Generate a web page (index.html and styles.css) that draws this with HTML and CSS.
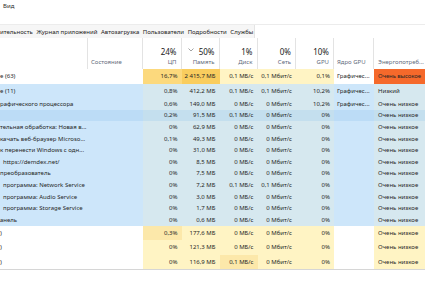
FILE: index.html
```html
<!DOCTYPE html>
<html lang="ru">
<head>
    <meta charset="UTF-8">
    <meta name="viewport" content="width=device-width, initial-scale=1.0">
    <title>Диспетчер задач</title>
    <link rel="stylesheet" href="styles.css">
</head>
<body>
    <div class="menu">Вид</div>
    <div class="tabs">
        <span class="tab first">ительность</span>
        <span class="tab">Журнал приложений</span>
        <span class="tab">Автозагрузка</span>
        <span class="tab">Пользователи</span>
        <span class="tab">Подробности</span>
        <span class="tab">Службы</span>
    </div>

    <div class="head">
        <div class="hcell"></div>
        <div class="hcell text"><span class="label">Состояние</span></div>
        <div class="hcell"><span class="pct">24%</span><span class="label">ЦП</span></div>
        <div class="hcell">
            <span class="pct sorted">
                <svg width="6" height="4" viewBox="0 0 6 4"><path d="M0.5 0.5 L3 3 L5.5 0.5" fill="none" stroke="#8a8a8a" stroke-width="0.8"/></svg>
                50%
            </span>
            <span class="label">Память</span>
        </div>
        <div class="hcell"><span class="pct">1%</span><span class="label">Диск</span></div>
        <div class="hcell"><span class="pct">0%</span><span class="label">Сеть</span></div>
        <div class="hcell"><span class="pct">10%</span><span class="label">GPU</span></div>
        <div class="hcell text"><span class="label">Ядро GPU</span></div>
        <div class="hcell text last"><span class="label">Энергопотреб...</span></div>
    </div>

    <div class="rows">
        <div class="row app">
            <div class="c name">e (63)</div><div class="c"></div>
            <div class="c n h3">16,7%</div><div class="c n h4">2 415,7 МБ</div>
            <div class="c n h0">0,1 МБ/с</div><div class="c n h0">0,1 Мбит/с</div>
            <div class="c n h0">0,1%</div><div class="c t">Графичес...</div>
            <div class="c t hot">Очень высокое</div>
        </div>
        <div class="row group">
            <div class="c name">e (11)</div><div class="c"></div>
            <div class="c n h0">0,8%</div><div class="c n h0">412,2 МБ</div>
            <div class="c n h0">0,1 МБ/с</div><div class="c n h0">0,1 Мбит/с</div>
            <div class="c n h0">10,2%</div><div class="c t">Графичес...</div>
            <div class="c t h0">Низкий</div>
        </div>
        <div class="row child">
            <div class="c name">рафического процессора</div><div class="c"></div>
            <div class="c n h0">0,6%</div><div class="c n h0">149,0 МБ</div>
            <div class="c n h0">0 МБ/с</div><div class="c n h0">0 Мбит/с</div>
            <div class="c n h0">10,2%</div><div class="c t">Графичес...</div>
            <div class="c t h0">Очень низкое</div>
        </div>
        <div class="row child hover">
            <div class="c name"></div><div class="c"></div>
            <div class="c n h0">0,2%</div><div class="c n h0">91,5 МБ</div>
            <div class="c n h0">0,1 МБ/с</div><div class="c n h0">0 Мбит/с</div>
            <div class="c n h0">0%</div><div class="c t"></div>
            <div class="c t h0">Очень низкое</div>
        </div>
        <div class="row child">
            <div class="c name">тельная обработка: Новая в...</div><div class="c"></div>
            <div class="c n h0">0%</div><div class="c n h0">62,9 МБ</div>
            <div class="c n h0">0 МБ/с</div><div class="c n h0">0 Мбит/с</div>
            <div class="c n h0">0%</div><div class="c t"></div>
            <div class="c t h0">Очень низкое</div>
        </div>
        <div class="row child">
            <div class="c name">качать веб-браузер Microso...</div><div class="c"></div>
            <div class="c n h0">0,1%</div><div class="c n h0">49,3 МБ</div>
            <div class="c n h0">0 МБ/с</div><div class="c n h0">0 Мбит/с</div>
            <div class="c n h0">0%</div><div class="c t"></div>
            <div class="c t h0">Очень низкое</div>
        </div>
        <div class="row child">
            <div class="c name">к перенести Windows с одн...</div><div class="c"></div>
            <div class="c n h0">0%</div><div class="c n h0">31,0 МБ</div>
            <div class="c n h0">0 МБ/с</div><div class="c n h0">0 Мбит/с</div>
            <div class="c n h0">0%</div><div class="c t"></div>
            <div class="c t h0">Очень низкое</div>
        </div>
        <div class="row child">
            <div class="c name cut">https://demdex.net/</div><div class="c"></div>
            <div class="c n h0">0%</div><div class="c n h0">8,5 МБ</div>
            <div class="c n h0">0 МБ/с</div><div class="c n h0">0 Мбит/с</div>
            <div class="c n h0">0%</div><div class="c t"></div>
            <div class="c t h0">Очень низкое</div>
        </div>
        <div class="row child">
            <div class="c name">преобразователь</div><div class="c"></div>
            <div class="c n h0">0%</div><div class="c n h0">7,5 МБ</div>
            <div class="c n h0">0 МБ/с</div><div class="c n h0">0 Мбит/с</div>
            <div class="c n h0">0%</div><div class="c t"></div>
            <div class="c t h0">Очень низкое</div>
        </div>
        <div class="row child">
            <div class="c name cut">программа: Network Service</div><div class="c"></div>
            <div class="c n h0">0%</div><div class="c n h0">7,2 МБ</div>
            <div class="c n h0">0,1 МБ/с</div><div class="c n h0">0,1 Мбит/с</div>
            <div class="c n h0">0%</div><div class="c t"></div>
            <div class="c t h0">Очень низкое</div>
        </div>
        <div class="row child">
            <div class="c name cut">программа: Audio Service</div><div class="c"></div>
            <div class="c n h0">0%</div><div class="c n h0">3,0 МБ</div>
            <div class="c n h0">0 МБ/с</div><div class="c n h0">0 Мбит/с</div>
            <div class="c n h0">0%</div><div class="c t"></div>
            <div class="c t h0">Очень низкое</div>
        </div>
        <div class="row child">
            <div class="c name cut">программа: Storage Service</div><div class="c"></div>
            <div class="c n h0">0%</div><div class="c n h0">1,7 МБ</div>
            <div class="c n h0">0 МБ/с</div><div class="c n h0">0 Мбит/с</div>
            <div class="c n h0">0%</div><div class="c t"></div>
            <div class="c t h0">Очень низкое</div>
        </div>
        <div class="row child">
            <div class="c name">анель</div><div class="c"></div>
            <div class="c n h0">0%</div><div class="c n h0">0,6 МБ</div>
            <div class="c n h0">0 МБ/с</div><div class="c n h0">0 Мбит/с</div>
            <div class="c n h0">0%</div><div class="c t"></div>
            <div class="c t h0">Очень низкое</div>
        </div>
        <div class="row app">
            <div class="c name">)</div><div class="c"></div>
            <div class="c n h1">0,3%</div><div class="c n h0">177,6 МБ</div>
            <div class="c n h0">0 МБ/с</div><div class="c n h0">0 Мбит/с</div>
            <div class="c n h0">0%</div><div class="c t"></div>
            <div class="c t h0">Очень низкое</div>
        </div>
        <div class="row app">
            <div class="c name">)</div><div class="c"></div>
            <div class="c n h0">0%</div><div class="c n h0">121,3 МБ</div>
            <div class="c n h0">0 МБ/с</div><div class="c n h0">0 Мбит/с</div>
            <div class="c n h0">0%</div><div class="c t"></div>
            <div class="c t h0">Очень низкое</div>
        </div>
        <div class="row app">
            <div class="c name">)</div><div class="c"></div>
            <div class="c n h0">0%</div><div class="c n h0">116,9 МБ</div>
            <div class="c n h1">0,1 МБ/с</div><div class="c n h0">0 Мбит/с</div>
            <div class="c n h0">0%</div><div class="c t"></div>
            <div class="c t h0">Очень низкое</div>
        </div>
    </div>
</body>
</html>
```

FILE: styles.css
```css
body {
    margin: 0;
    font-family: "Segoe UI", "Noto Sans", sans-serif;
    font-size: 6px;
    color: #262626;
    background: #fff;
}
.menu {
    box-sizing: border-box;
    height: 25px;
    padding: 2px 0 0 3px;
    line-height: 8px;
    border-bottom: 1px solid #ececec;
}
.tabs {
    display: flex;
    align-items: center;
    width: 254px;
    height: 13px;
    background: #f6f6f6;
    border-right: 1px solid #e4e4e4;
}
.tab {
    padding: 0 1.8px;
    white-space: nowrap;
    color: #222;
}
.tab.first {
    padding-left: 0;
}

.head,
.row {
    display: grid;
    grid-template-columns: 88px 55px 38.5px 38px 38px 38.5px 38px 40px 1fr;
}
.head {
    height: 31px;
}
.hcell {
    box-sizing: border-box;
    display: flex;
    flex-direction: column;
    justify-content: flex-end;
    align-items: flex-end;
    padding: 0 4px 3px 3px;
    border-right: 1px solid #e3e3e3;
}
.hcell.text {
    align-items: flex-start;
}
.hcell.last {
    border-right: none;
    padding-left: 4px;
}
.pct {
    font-size: 8px;
    line-height: 11px;
    margin-bottom: 1.5px;
    color: #1a1a1a;
}
.pct.sorted {
    display: flex;
    justify-content: space-between;
    align-items: flex-start;
    align-self: stretch;
    padding-left: 3px;
}
.pct.sorted svg {
    margin-top: 2px;
}
.label {
    line-height: 8px;
    color: #5f6b7c;
}

.rows {
    border-bottom: 1px solid #d6d6d6;
}
.row {
    height: 14.5px;
}
.row.child {
    height: 11.6px;
}
.c {
    box-sizing: border-box;
    display: flex;
    align-items: center;
    white-space: nowrap;
    overflow: hidden;
}
.c.n {
    justify-content: flex-end;
    padding-right: 4px;
}
.c.t {
    padding-left: 3px;
}
.c.t:last-child {
    padding-left: 4px;
}
.c.hot {
    padding-left: 3px;
    letter-spacing: -0.1px;
}
.name.cut {
    padding-left: 3px;
}

.group,
.child {
    background: #cde6fa;
}
.child.hover {
    background: #bcdcf6;
}
.h0 {
    background: #fff4c4;
}
.h1 {
    background: #fce8aa;
}
.h3 {
    background: #fcd97d;
}
.h4 {
    background: #f9cd5e;
}
.hot {
    background: #f5692b;
}
.group .h0,
.child .h0 {
    background: #d6e8ef;
}
.child.hover .h0 {
    background: #c4dfee;
}
```
